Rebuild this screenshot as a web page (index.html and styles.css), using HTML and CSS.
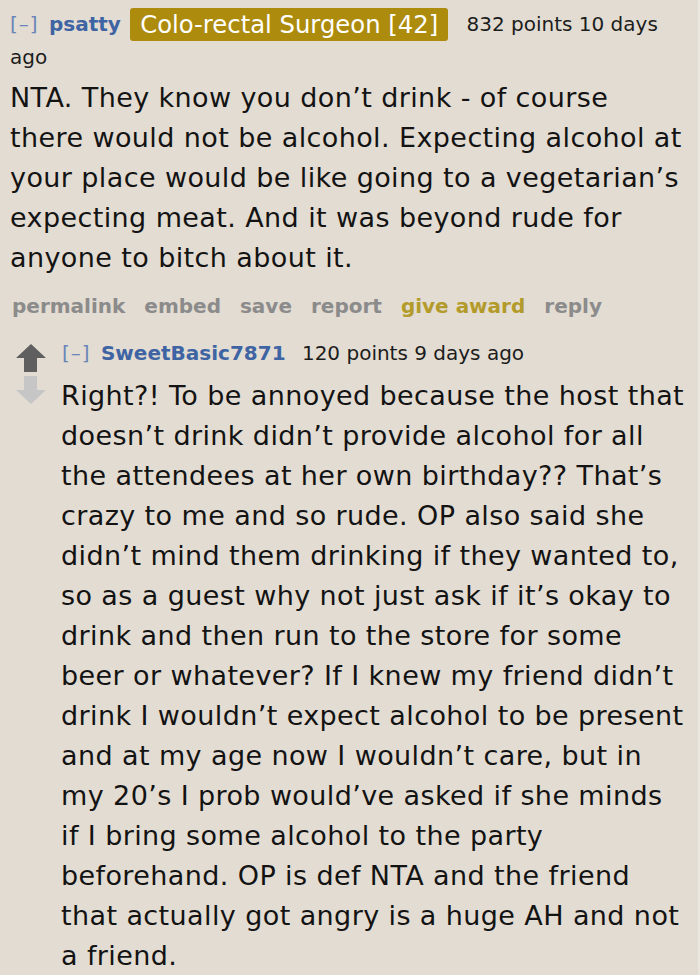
FILE: index.html
```html
<!DOCTYPE html>
<html>
<head>
<meta charset="utf-8">
<link rel="stylesheet" href="styles.css">
</head>
<body>
<div class="page">
  <div class="comment">
    <div class="tagline">
      <span class="toggle">[–]</span>
      <span class="author">psatty</span>
      <span class="flair">Colo-rectal Surgeon [42]</span>
      <span class="score">832 points 10 days</span>
      <span class="score">ago</span>
    </div>
    <div class="body body-main">NTA. They know you don’t drink - of course<br>there would not be alcohol. Expecting alcohol at<br>your place would be like going to a vegetarian’s<br>expecting meat. And it was beyond rude for<br>anyone to bitch about it.</div>
    <ul class="buttons">
      <li>permalink</li>
      <li>embed</li>
      <li>save</li>
      <li>report</li>
      <li class="award">give award</li>
      <li>reply</li>
    </ul>
    <div class="child">
      <div class="votes">
        <svg class="arrow" width="30" height="28" viewBox="0 0 30 28"><path d="M15 0 L30 14 L21 14 L21 28 L8 28 L8 14 L0 14 Z" fill="#5f5f5f"/></svg>
        <svg class="arrow" width="30" height="28" viewBox="0 0 30 28"><path d="M8 0 L21 0 L21 14 L30 14 L15 28 L0 14 L8 14 Z" fill="#c6c6c6"/></svg>
      </div>
      <div class="entry">
        <div class="tagline tagline-child">
          <span class="toggle">[–]</span>
          <span class="author">SweetBasic7871</span>
          <span class="score">120 points 9 days ago</span>
        </div>
        <div class="body body-child">Right?! To be annoyed because the host that<br>doesn’t drink didn’t provide alcohol for all<br>the attendees at her own birthday?? That’s<br>crazy to me and so rude. OP also said she<br>didn’t mind them drinking if they wanted to,<br>so as a guest why not just ask if it’s okay to<br>drink and then run to the store for some<br>beer or whatever? If I knew my friend didn’t<br>drink I wouldn’t expect alcohol to be present<br>and at my age now I wouldn’t care, but in<br>my 20’s I prob would’ve asked if she minds<br>if I bring some alcohol to the party<br>beforehand. OP is def NTA and the friend<br>that actually got angry is a huge AH and not<br>a friend.</div>
      </div>
    </div>
  </div>
</div>
</body>
</html>
```

FILE: styles.css
```css
html, body {
  margin: 0;
  padding: 0;
  background: #e3dcd2;
}
.page {
  width: 700px;
  height: 975px;
  overflow: hidden;
  box-sizing: border-box;
  padding: 8px 2px 0 10px;
  border-right: 2px solid #ebe6de;
  font-family: "DejaVu Sans", "Liberation Sans", sans-serif;
  color: #131313;
}
.tagline {
  font-size: 20px;
  line-height: 33px;
}
.toggle {
  color: #6a86b8;
  letter-spacing: 1px;
  margin-right: 4px;
}
.author {
  color: #3e64a3;
  font-weight: bold;
}
.flair {
  display: inline-block;
  background: #ad8b0d;
  color: #fff;
  font-size: 24.3px;
  line-height: 33px;
  padding: 0 10px;
  border-radius: 3px;
  margin: 0 12px 0 3px;
  vertical-align: top;
}
.score {
  color: #1c1c1c;
}
.body {
  font-size: 27px;
  line-height: 40px;
  letter-spacing: 0.4px;
}
.body-main {
  margin-top: 4px;
}
.buttons {
  list-style: none;
  margin: 12px 0 0 2px;
  padding: 0;
  display: flex;
  gap: 19px;
  font-size: 20px;
  font-weight: bold;
  color: #8b8b8b;
  line-height: 32px;
}
.buttons .award {
  color: #b39b2b;
}
.child {
  display: flex;
  margin-top: 15px;
}
.votes {
  width: 51px;
  flex: none;
  display: flex;
  flex-direction: column;
  align-items: flex-start;
  padding: 7px 0 0 6px;
  gap: 4px;
  box-sizing: border-box;
}
.arrow {
  display: block;
}
.entry {
  flex: 1;
  min-width: 0;
}
.tagline-child {
  line-height: 32px;
}
.tagline-child .toggle {
  margin-left: 1px;
}
.tagline-child .author {
  margin-right: 10px;
}
.body-child {
  margin-top: 7px;
}
```
